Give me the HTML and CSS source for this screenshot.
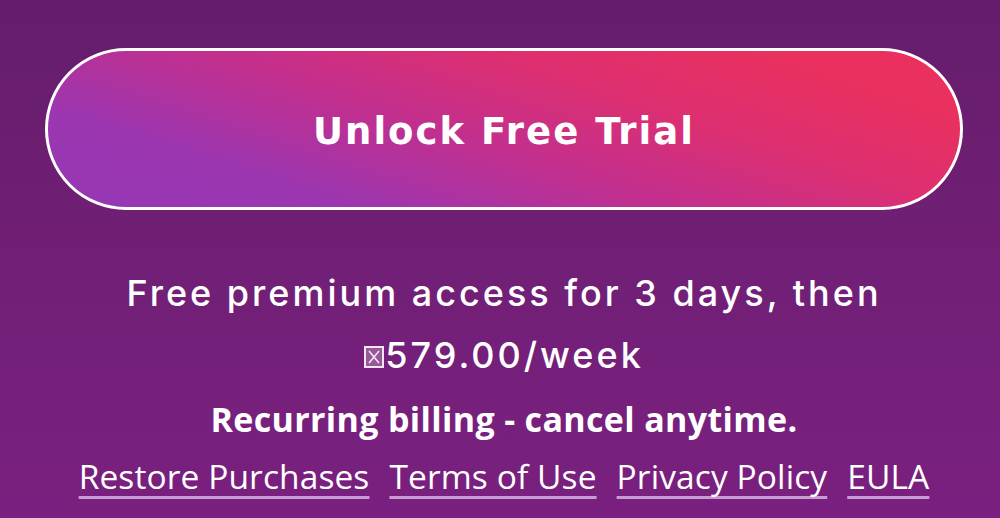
FILE: index.html
```html
<!DOCTYPE html>
<html lang="en">
<head>
  <meta charset="UTF-8" />
  <meta name="viewport" content="width=device-width, initial-scale=1.0"/>
  <title>Unlock Free Trial</title>
  <link rel="stylesheet" href="styles.css">
</head>
<body>

  <div class="paywall">
    <button class="trial-button">Unlock Free Trial</button>

    <p class="offer">
      Free premium access for 3 days, then<br>
      <svg class="tofu" width="20" height="22" viewBox="0 0 20 22" aria-hidden="true">
        <rect x="1" y="1" width="18" height="20" fill="rgba(255,255,255,0.25)" stroke="#f3e6f4" stroke-width="2"/>
        <path d="M5 5 L15 17 M15 5 L5 17" stroke="#f3e6f4" stroke-width="1.6" fill="none"/>
      </svg>579.00/week
    </p>

    <p class="billing">Recurring billing - cancel anytime.</p>

    <div class="links">
      <a href="#">Restore Purchases</a>
      <a href="#">Terms of Use</a>
      <a href="#">Privacy Policy</a>
      <a href="#">EULA</a>
    </div>
  </div>

</body>
</html>
```

FILE: styles.css
```css
body {
  margin: 0;
  height: 518px;
  overflow: hidden;
  background: linear-gradient(180deg, #651d6b 0%, #711f76 50%, #7a2080 100%);
  color: white;
  font-family: "Open Sans", Arial, sans-serif;
}

.paywall {
  padding: 48px 37px 0 45px;
  text-align: center;
}

.trial-button {
  display: block;
  width: 100%;
  height: 162px;
  border: 3px solid white;
  border-radius: 81px;
  background: linear-gradient(18deg, #9637b5 0%, #9c36b0 22%, #c22f8e 45%, #dc2f72 65%, #e9305f 85%, #e9305f 100%);
  color: white;
  font-family: "DejaVu Sans", sans-serif;
  font-weight: 700;
  font-size: 37px;
  letter-spacing: 2px;
  padding: 4px 0 0;
  cursor: pointer;
}

.offer {
  margin: 52px 0 0;
  font-family: Inter, sans-serif;
  font-weight: 500;
  font-size: 36px;
  line-height: 62px;
  letter-spacing: 3px;
}

.tofu {
  vertical-align: baseline;
  margin-right: 1px;
}

.billing {
  margin: 13px 0 0;
  font-weight: 700;
  font-size: 34px;
  line-height: 40px;
  letter-spacing: 0.35px;
}

.links {
  display: flex;
  justify-content: center;
  gap: 20px;
  margin-top: 17px;
}

.links a {
  color: white;
  font-size: 33.5px;
  line-height: 40px;
  letter-spacing: 0.1px;
  text-decoration: underline;
  text-decoration-color: #c79cd2;
  text-decoration-thickness: 3px;
  text-decoration-skip-ink: none;
  text-underline-offset: 7px;
}
```
